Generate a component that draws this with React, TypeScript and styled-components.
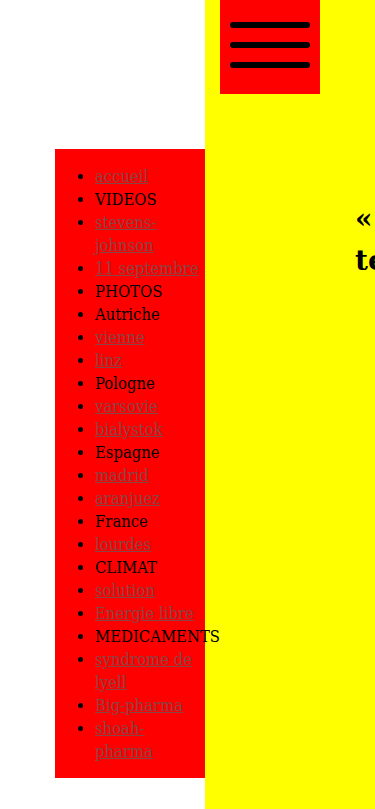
import React from "react";
import styled, { createGlobalStyle } from "styled-components";

const GlobalStyle = createGlobalStyle`
  html, body {
    margin: 0;
    padding: 0;
    background: #ffffff;
  }
  body {
    overflow: hidden;
    font-family: "DejaVu Serif Condensed", "DejaVu Serif", serif;
    font-stretch: condensed;
    font-size: 16.5px;
    color: #000;
  }
`;

const Page = styled.div`
  display: flex;
  width: 375px;
  min-height: 809px;
  overflow: hidden;
`;

const LeftColumn = styled.div`
  position: relative;
  z-index: 1;
  flex: 0 0 205px;
  box-sizing: border-box;
  padding: 149px 0 31px 55px;
`;

const Sidebar = styled.nav`
  width: 150px;
  background: #ff0000;
`;

const MenuList = styled.ul`
  margin: 0;
  padding: 16px 6px 15px 40px;
  line-height: 23px;
  list-style: disc;
`;

const Item = styled.li`
  white-space: normal;
`;

const NavLink = styled.a`
  color: #8a4343;
  text-decoration: underline;
`;

const Main = styled.main`
  flex: 0 0 420px;
  background: #ffff00;
  min-height: 809px;
`;

const MenuButton = styled.div`
  margin-left: 15px;
  width: 100px;
  height: 94px;
  box-sizing: border-box;
  padding: 22px 10px;
  background: #ff0000;
  display: flex;
  flex-direction: column;
  gap: 14px;
`;

const Bar = styled.span`
  display: block;
  height: 6px;
  border-radius: 3px;
  background: #000;
`;

const Title = styled.h1`
  margin: 104px 0 0 150px;
  width: 210px;
  font-family: "DejaVu Serif", serif;
  font-stretch: normal;
  font-size: 28px;
  line-height: 42px;
  font-weight: 700;
  color: #000;
`;

type Entry = { label: string; link?: boolean };

const entries: Entry[] = [
  { label: "accueil", link: true },
  { label: "VIDEOS" },
  { label: "stevens-johnson", link: true },
  { label: "11 septembre", link: true },
  { label: "PHOTOS" },
  { label: "Autriche" },
  { label: "vienne", link: true },
  { label: "linz", link: true },
  { label: "Pologne" },
  { label: "varsovie", link: true },
  { label: "bialystok", link: true },
  { label: "Espagne" },
  { label: "madrid", link: true },
  { label: "aranjuez", link: true },
  { label: "France" },
  { label: "lourdes", link: true },
  { label: "CLIMAT" },
  { label: "solution", link: true },
  { label: "Energie libre", link: true },
  { label: "MEDICAMENTS" },
  { label: "syndrome de lyell", link: true },
  { label: "Big-pharma", link: true },
  { label: "shoah-pharma", link: true },
];

export default function App() {
  return (
    <>
      <GlobalStyle />
      <Page>
        <LeftColumn>
          <Sidebar>
            <MenuList>
              {entries.map((e) => (
                <Item key={e.label}>
                  {e.link ? <NavLink href="#">{e.label}</NavLink> : e.label}
                </Item>
              ))}
            </MenuList>
          </Sidebar>
        </LeftColumn>
        <Main>
          <MenuButton>
            <Bar />
            <Bar />
            <Bar />
          </MenuButton>
          <Title>
            «
            <br />
            terrorisme »
          </Title>
        </Main>
      </Page>
    </>
  );
}
